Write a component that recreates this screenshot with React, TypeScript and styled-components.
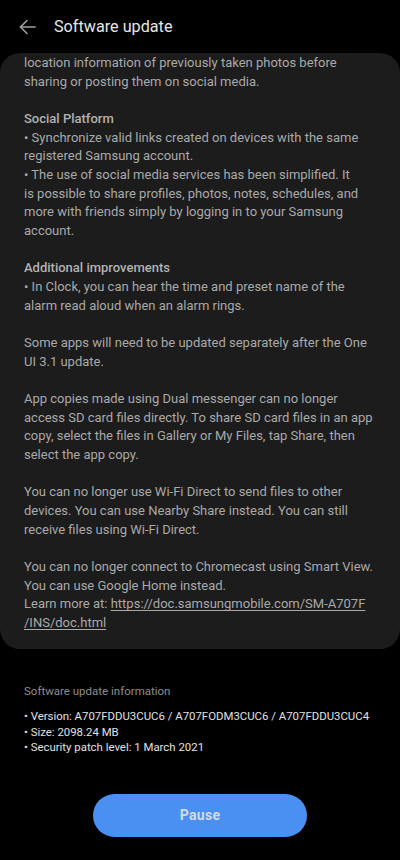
import React from "react";
import styled, { createGlobalStyle } from "styled-components";

const Global = createGlobalStyle`
  html, body { margin: 0; padding: 0; background: #000; }
  body { font-family: Roboto, "Noto Sans", sans-serif; -webkit-font-smoothing: antialiased; }
  * { box-sizing: border-box; }
`;

const Screen = styled.div`
  width: 400px;
  height: 860px;
  background: #000;
  display: flex;
  flex-direction: column;
  overflow: hidden;
`;

const Header = styled.div`
  height: 53px;
  display: flex;
  align-items: center;
  padding: 0 0 0 18px;
  gap: 18px;
  flex-shrink: 0;
`;

const BackButton = styled.button`
  width: 18px;
  height: 18px;
  padding: 0;
  border: none;
  background: none;
  display: flex;
  align-items: center;
  justify-content: center;
`;

const Title = styled.h1`
  margin: 0;
  font-size: 16.2px;
  font-weight: 400;
  color: #e6e6e6;
`;

const Card = styled.div`
  background: #1c1c1c;
  border-radius: 20px;
  padding: 1px 8px 0 24px;
  height: 596px;
  flex-shrink: 0;
  overflow: hidden;
`;

const Notes = styled.div`
  font-size: 13px;
  line-height: 18.67px;
  color: #a9a9a9;
  white-space: nowrap;
`;

const Para = styled.p`
  margin: 0 0 18.67px 0;
  &:last-child { margin-bottom: 0; }
`;

const Heading = styled.span`
  display: block;
  font-weight: 500;
  color: #b2b2b2;
`;

const Link = styled.a`
  color: #a9a9a9;
  text-decoration: underline;
  text-underline-offset: 2px;
`;

const Info = styled.div`
  padding: 35px 24px 0 24px;
  display: flex;
  flex-direction: column;
`;

const InfoTitle = styled.div`
  font-size: 11.5px;
  color: #8c8c8c;
  margin-bottom: 11px;
`;

const InfoLine = styled.div`
  font-size: 11.4px;
  line-height: 15.6px;
  color: #e0e0e0;
  white-space: nowrap;
`;

const ButtonRow = styled.div`
  display: flex;
  justify-content: center;
  padding-top: 38px;
`;

const PauseButton = styled.button`
  width: 214px;
  height: 43px;
  border-radius: 22px;
  border: none;
  background: #4a90f2;
  color: #d8d8d8;
  font-family: Roboto, sans-serif;
  font-size: 14px;
  font-weight: 700;
  letter-spacing: 0.3px;
`;

export default function App() {
  return (
    <Screen>
      <Global />
      <Header>
        <BackButton aria-label="Back">
          <svg width="17" height="16" viewBox="0 0 17 16" fill="none" stroke="#a0a0a0" strokeWidth="1.6" strokeLinecap="round" strokeLinejoin="round">
            <path d="M16 8H1.5" />
            <path d="M8 1.5L1.5 8L8 14.5" />
          </svg>
        </BackButton>
        <Title>Software update</Title>
      </Header>
      <Card>
        <Notes>
          <Para>
            location information of previously taken photos before<br />
            sharing or posting them on social media.
          </Para>
          <Para>
            <Heading>Social Platform</Heading>
            • Synchronize valid links created on devices with the same<br />
            registered Samsung account.<br />
            • The use of social media services has been simplified. It<br />
            is possible to share profiles, photos, notes, schedules, and<br />
            more with friends simply by logging in to your Samsung<br />
            account.
          </Para>
          <Para>
            <Heading>Additional improvements</Heading>
            • In Clock, you can hear the time and preset name of the<br />
            alarm read aloud when an alarm rings.
          </Para>
          <Para>
            Some apps will need to be updated separately after the One<br />
            UI 3.1 update.
          </Para>
          <Para>
            App copies made using Dual messenger can no longer<br />
            access SD card files directly. To share SD card files in an app<br />
            copy, select the files in Gallery or My Files, tap Share, then<br />
            select the app copy.
          </Para>
          <Para>
            You can no longer use Wi-Fi Direct to send files to other<br />
            devices. You can use Nearby Share instead. You can still<br />
            receive files using Wi-Fi Direct.
          </Para>
          <Para>
            You can no longer connect to Chromecast using Smart View.<br />
            You can use Google Home instead.<br />
            Learn more at: <Link href="#">https://doc.samsungmobile.com/SM-A707F<br />/INS/doc.html</Link>
          </Para>
        </Notes>
      </Card>
      <Info>
        <InfoTitle>Software update information</InfoTitle>
        <InfoLine>• Version: A707FDDU3CUC6 / A707FODM3CUC6 / A707FDDU3CUC4</InfoLine>
        <InfoLine>• Size: 2098.24 MB</InfoLine>
        <InfoLine>• Security patch level: 1 March 2021</InfoLine>
      </Info>
      <ButtonRow>
        <PauseButton>Pause</PauseButton>
      </ButtonRow>
    </Screen>
  );
}
